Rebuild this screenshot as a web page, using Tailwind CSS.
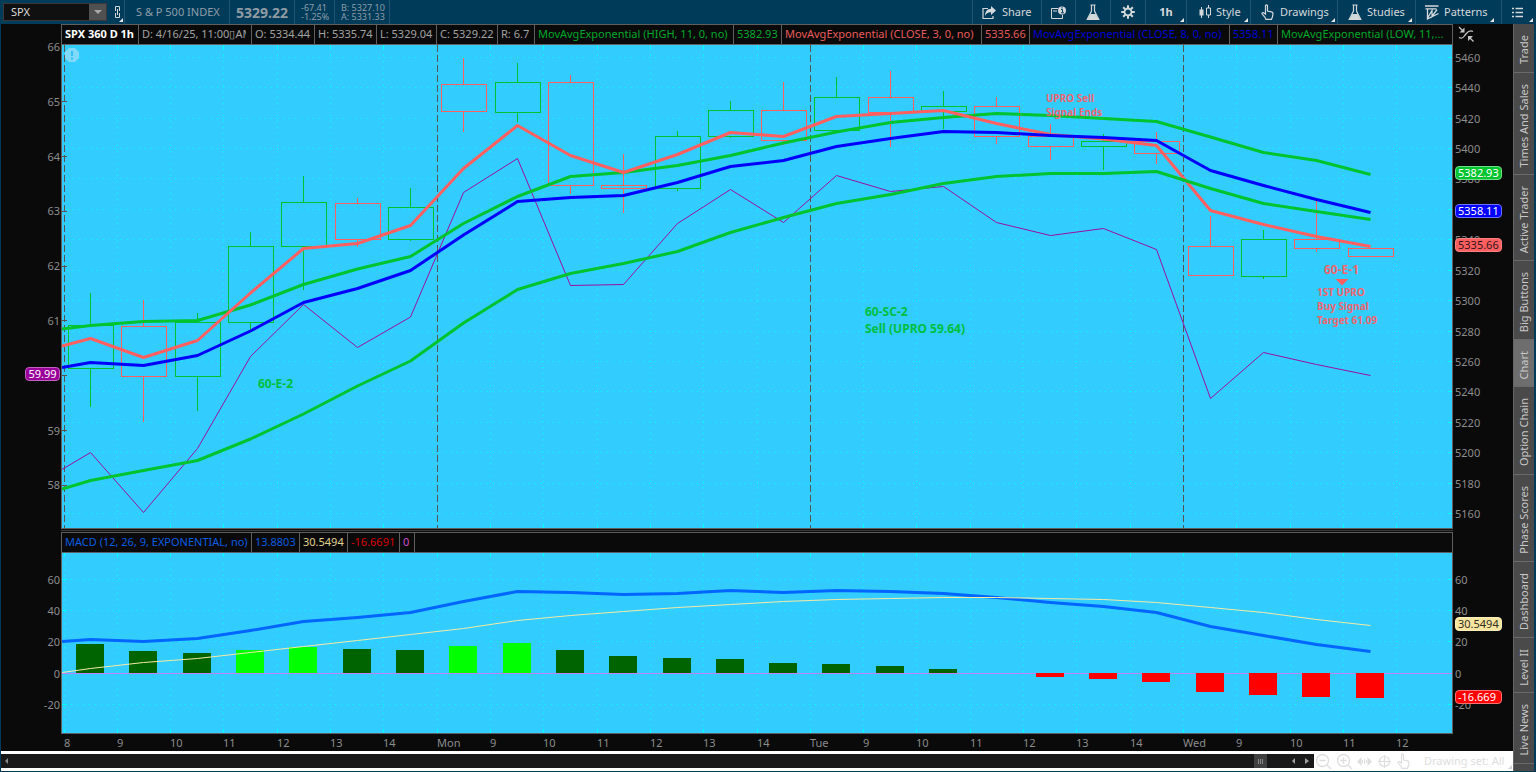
<!DOCTYPE html>
<html lang="en">
<head>
<meta charset="utf-8">
<title>SPX – S &amp; P 500 INDEX</title>
<script src="https://cdn.jsdelivr.net/npm/@tailwindcss/browser@4"></script>
</head>
<body class="h-screen overflow-hidden bg-[#0a0a0a] font-['Noto_Sans',sans-serif] text-[11px] text-[#8c8c8c]">
<div class="flex h-full flex-col border-b border-l border-[#003b5a]">

  <!-- Toolbar -->
  <header class="flex h-6 shrink-0 items-stretch bg-[#003b5a] text-[#d3d8db]">
    <div class="my-[3px] ml-[2px] flex w-26 border border-[#3a3a3a] bg-[#101010]">
      <input aria-label="Symbol" value="SPX" class="min-w-0 flex-1 bg-transparent pl-[7px] text-[11px] text-[#dcdcdc] outline-none">
      <button aria-label="Open symbol list" class="flex w-[17px] items-center justify-center bg-[#505050]">
        <svg width="8" height="4" viewBox="0 0 8 4"><path d="M0 0h8L4 4z" fill="#a8a8a8"/></svg>
      </button>
    </div>
    <button aria-label="Link symbol" class="relative flex w-[18px] items-center justify-center border-r border-[#1d5473] pl-1">
      <svg width="7" height="14" viewBox="0 0 7 14" fill="none" stroke="#d3d8db" stroke-width="1"><path d="M1.500 6V1.500h4V6M1.500 8v4.500h4V8M3.500 4v6"/></svg>
      <svg class="absolute right-px bottom-[2px]" width="4" height="4" viewBox="0 0 4 4"><path d="M4 0v4H0z" fill="#e6e6e6"/></svg>
    </button>
    <div class="flex w-[105px] items-center border-r border-[#1d5473] pl-[11px] text-[11px] whitespace-nowrap text-[#8d9ea8]">S &amp; P 500 INDEX</div>
    <div class="flex w-[65px] items-center border-r border-[#1d5473] pl-[6px] text-[14px] font-bold text-[#8f9ba2]">5329.22</div>
    <div class="flex w-10 flex-col justify-center border-r border-[#1d5473] pl-[6px] text-[9px] leading-[9px] whitespace-nowrap text-[#8d9ea8]"><span>-67.41</span><span>-1.25%</span></div>
    <div class="flex w-[55px] flex-col justify-center border-r border-[#1d5473] pl-[6px] text-[9px] leading-[9px] whitespace-nowrap text-[#8d9ea8]"><span>B: 5327.10</span><span>A: 5331.33</span></div>
    <div class="flex-1"></div>
    <button class="flex w-[69px] items-center gap-[6px] border-l border-[#1d5473] pl-[9px]">
      <svg width="14" height="13" viewBox="0 0 14 13"><path d="M6 2.500H1v10h10V10" fill="none" stroke="#d3d8db" stroke-width="1.200"/><path d="M9 0l5 4.500L9 9V6.300C6 6.200 4.200 7.300 3 10c0-4.300 2-7.200 6-7.300z" fill="#d3d8db"/></svg>Share</button>
    <button aria-label="Calendar events" class="flex w-[34px] items-center justify-center border-l border-[#1d5473]">
      <svg width="15" height="13" viewBox="0 0 15 13"><path d="M7 2.500H.500v10h11V9" fill="none" stroke="#d3d8db"/><path d="M2 5h4" stroke="#d3d8db"/><circle cx="11" cy="4.500" r="4" fill="#d3d8db"/><path d="M10 3.500h1.500v3M10 6.800h3M11 1.200v1.300" stroke="#003b5a" fill="none"/></svg></button>
    <button aria-label="Alerts" class="flex w-[35px] items-center justify-center border-l border-[#1d5473]">
      <svg width="14" height="17" viewBox="0 0 14 17"><path d="M4.500 1h5M5.500 1v6L1.200 15.500h11.600L8.500 7V1" fill="none" stroke="#d3d8db" stroke-width="1.200"/><path d="M4.500 10h5l3 5.500h-11z" fill="#d3d8db"/></svg></button>
    <button aria-label="Settings" class="flex w-[35px] items-center justify-center border-l border-[#1d5473]">
      <svg width="14" height="14" viewBox="-7 -7 14 14" stroke="#d3d8db" fill="none"><circle r="3.500" stroke-width="1.800"/><path stroke-width="2" d="M0-4v-2.800M0 4v2.800M-4 0h-2.800M4 0h2.800M-2.800-2.800l-2-2M2.800 2.800l2 2M-2.800 2.800l-2 2M2.800-2.800l2-2"/></svg></button>
    <button class="relative w-[41px] border-l border-[#1d5473] font-bold">1h
      <svg class="absolute right-[2px] bottom-[2px]" width="4" height="4" viewBox="0 0 4 4"><path d="M4 0v4H0z" fill="#e6e6e6"/></svg></button>
    <button class="relative flex w-16 items-center gap-[5px] border-l border-[#1d5473] pl-3">
      <svg width="12" height="14" viewBox="0 0 12 14"><path d="M2.500 2v11M9.500 0v3M9.500 10v3" stroke="#d3d8db"/><path d="M.500 4.500h4v6h-4z" fill="#d3d8db"/><path d="M7.500 3h4v7h-4z" fill="none" stroke="#d3d8db"/></svg>Style
      <svg class="absolute right-[2px] bottom-[2px]" width="4" height="4" viewBox="0 0 4 4"><path d="M4 0v4H0z" fill="#e6e6e6"/></svg></button>
    <button class="relative flex w-[87px] items-center gap-[6px] border-l border-[#1d5473] pl-[10px]">
      <svg width="13" height="16" viewBox="0 0 13 16"><path d="M4.500 10V1.500Q5.500.300 6.500 1.500V7l4 .8q1.600.4 1.500 2L11.400 13l-1 2.300H5L3.800 13 1 9.800Q1 8.300 2.600 8.700z" fill="none" stroke="#d3d8db" stroke-width="1.200"/></svg>Drawings
      <svg class="absolute right-[2px] bottom-[2px]" width="4" height="4" viewBox="0 0 4 4"><path d="M4 0v4H0z" fill="#e6e6e6"/></svg></button>
    <button class="relative flex w-[78px] items-center gap-[5px] border-l border-[#1d5473] pl-[10px]">
      <svg width="14" height="17" viewBox="0 0 14 17"><path d="M4.500 1h5M5.500 1v6L1.200 15.500h11.600L8.500 7V1" fill="none" stroke="#d3d8db" stroke-width="1.200"/><path d="M4.500 10h5l3 5.500h-11z" fill="#d3d8db"/></svg>Studies
      <svg class="absolute right-[3px] bottom-[2px]" width="4" height="4" viewBox="0 0 4 4"><path d="M4 0v4H0z" fill="#e6e6e6"/></svg></button>
    <button class="relative flex w-[86px] items-center gap-[5px] border-l border-[#1d5473] pl-[9px]">
      <svg width="14" height="15" viewBox="0 0 14 15" fill="none" stroke="#d3d8db" stroke-width="1.300"><path d="M0 1h13.500M.500 3.800h11M2.500 4v9L7 5.500v6L12 4.500M2 14.200L13.500 8.500"/></svg>Patterns
      <svg class="absolute right-[7px] bottom-[2px]" width="4" height="4" viewBox="0 0 4 4"><path d="M4 0v4H0z" fill="#e6e6e6"/></svg></button>
    <button aria-label="Menu" class="relative flex w-[35px] items-center justify-center border-l border-[#1d5473] pr-1">
      <svg width="11" height="11" viewBox="0 0 11 11" stroke="#d3d8db" stroke-width="1.400"><path d="M0 1.500h2M3.500 1.500H11M0 5.500h2M3.500 5.500H11M0 9.500h2M3.500 9.500H11"/></svg>
      <svg class="absolute right-[3px] bottom-[2px]" width="4" height="4" viewBox="0 0 4 4"><path d="M4 0v4H0z" fill="#e6e6e6"/></svg></button>
  </header>

  <div class="flex min-h-0 flex-1">
    <main class="flex min-w-0 flex-1 flex-col">
      <!-- Chart grid: left axis, plots, right axis -->
      <div class="grid min-h-0 flex-1 grid-cols-[60px_minmax(0,1fr)_60px] grid-rows-[21px_minmax(0,483fr)_4px_21px_minmax(0,180fr)_18px]">
        <div></div>
        <div class="flex items-stretch overflow-hidden border border-[#5f5f5f] leading-[18px] whitespace-nowrap text-[#a2a2a2]">
          <div class="w-[77px] shrink-0 overflow-hidden border-r border-[#5f5f5f] pl-[3px] font-bold text-white">SPX 360 D 1h</div>
          <div class="w-[113px] shrink-0 border-r border-[#5f5f5f] pl-[3px]"><div class="w-[104px] overflow-hidden">D: 4/16/25, 11:00▯AM</div></div>
          <div class="w-[63px] shrink-0 border-r border-[#5f5f5f] pl-[3px]">O: 5334.44</div>
          <div class="w-[62px] shrink-0 border-r border-[#5f5f5f] pl-[3px]">H: 5335.74</div>
          <div class="w-[60px] shrink-0 border-r border-[#5f5f5f] pl-[3px]">L: 5329.04</div>
          <div class="w-[61px] shrink-0 border-r border-[#5f5f5f] pl-[3px]">C: 5329.22</div>
          <div class="w-[37px] shrink-0 border-r border-[#5f5f5f] pl-[3px]">R: 6.7</div>
          <div class="w-[199px] shrink-0 border-r border-[#5f5f5f] pl-[3px] text-[#00a82b]">MovAvgExponential (HIGH, 11, 0, no)</div>
          <div class="w-[48px] shrink-0 border-r border-[#5f5f5f] pl-[3px] text-[#00a82b]">5382.93</div>
          <div class="w-[200px] shrink-0 border-r border-[#5f5f5f] pl-[3px] text-[#e85a5a]">MovAvgExponential (CLOSE, 3, 0, no)</div>
          <div class="w-[48px] shrink-0 border-r border-[#5f5f5f] pl-[3px] text-[#e85a5a]">5335.66</div>
          <div class="w-[200px] shrink-0 border-r border-[#5f5f5f] pl-[3px] text-[#0000d8]">MovAvgExponential (CLOSE, 8, 0, no)</div>
          <div class="w-[48px] shrink-0 border-r border-[#5f5f5f] pl-[3px] text-[#0000d8]">5358.11</div>
          <div class="min-w-0 flex-1 overflow-hidden pl-[3px] text-[#00a82b]">MovAvgExponential (LOW, 11,...</div>
        </div>
        <div class="pt-[2px] pl-[5px]">
          <svg width="17" height="17" viewBox="0 0 17 17" fill="none" stroke="#c4c4c4" stroke-width="1.300"><path d="M1 11.500c4 2 5-1 6.500-3S11 3.500 15 5.500M1 1l4 4M15.500 15.500l-4-4"/><path d="M6.500 1.500V6.500H1.500zM10 15v-5h5z" fill="#c4c4c4" stroke="none"/></svg>
        </div>

        <div id="priceLeft" class="relative z-10"></div>
        <div id="pricePlot" class="relative overflow-hidden border-x border-[#5f5f5f] bg-[#33ccff]">
          <svg id="priceSvg" class="absolute inset-0 size-full" viewBox="62 45 1390 483" preserveAspectRatio="none" fill="none"></svg>
          <svg class="absolute top-[3px] left-[3px]" width="14" height="14" viewBox="0 0 14 14"><path d="M4 0h6l4 4v6l-4 4H4l-4-4V4z" fill="#80d8fa"/><path d="M7 3v5M7 9.500v2" stroke="#33bff0" stroke-width="2"/></svg>
        </div>
        <div id="priceRight" class="relative"></div>

        <div></div>
        <div class="flex flex-col border-t border-[#5f5f5f] pt-px"><div class="h-px bg-[#3c3c3c]"></div></div>
        <div></div>

        <div></div>
        <div class="flex items-stretch border border-[#5f5f5f] leading-[18px] whitespace-nowrap">
          <div class="w-[190px] border-r border-[#5f5f5f] pl-[3px] text-[#0a5ce0]">MACD (12, 26, 9, EXPONENTIAL, no)</div>
          <div class="w-12 border-r border-[#5f5f5f] pl-[3px] text-[#0a5ce0]">13.8803</div>
          <div class="w-12 border-r border-[#5f5f5f] pl-[3px] text-[#e0d190]">30.5494</div>
          <div class="w-[52px] border-r border-[#5f5f5f] pl-[3px] text-[#d80000]">-16.6691</div>
          <div class="w-[15px] border-r border-[#5f5f5f] pl-[3px] text-[#cf4fcf]">0</div>
        </div>
        <div></div>

        <div id="macdLeft" class="relative"></div>
        <div class="relative overflow-hidden border-x border-[#5f5f5f] bg-[#33ccff]">
          <svg id="macdSvg" class="absolute inset-0 size-full" viewBox="62 553 1390 180" preserveAspectRatio="none" fill="none"></svg>
        </div>
        <div id="macdRight" class="relative"></div>

        <div></div>
        <div id="timeAxis" class="relative border-t border-[#5f5f5f]"></div>
        <div></div>
      </div>

      <!-- Scroll strip and chart tools -->
      <footer class="flex h-5 shrink-0 items-stretch bg-white text-[#dedede]">
        <div class="my-[3px] flex flex-1 items-center justify-between bg-[#191919]">
          <button aria-label="Scroll left" class="pl-1"><svg width="3" height="6" viewBox="0 0 3 6"><path d="M3 0v6L0 3z" fill="#8a8a8a"/></svg></button>
          <div class="flex h-full items-center">
            <div class="mr-[25px] flex h-full w-[13px] items-center justify-center gap-px bg-[#404040]"><i class="h-[5px] w-px bg-[#888]"></i><i class="h-[5px] w-px bg-[#888]"></i><i class="h-[5px] w-px bg-[#888]"></i></div>
            <button aria-label="Step left"><svg width="3" height="6" viewBox="0 0 3 6"><path d="M3 0v6L0 3z" fill="#a0a0a0"/></svg></button>
            <button aria-label="Step right" class="mr-[5px] ml-[10px]"><svg width="4" height="6" viewBox="0 0 4 6"><path d="M0 0v6L4 3z" fill="#a0a0a0"/></svg></button>
          </div>
        </div>
        <div class="flex w-[199px] items-center gap-1 pl-[1px]">
          <button aria-label="Zoom out"><svg width="17" height="17" viewBox="0 0 17 17" fill="none" stroke="#dedede" stroke-width="1.300"><circle cx="7.500" cy="7.500" r="6"/><path d="M4.500 7.500h6M12 12l4 4"/></svg></button>
          <button aria-label="Zoom in"><svg width="17" height="17" viewBox="0 0 17 17" fill="none" stroke="#dedede" stroke-width="1.300"><circle cx="7.500" cy="7.500" r="6"/><path d="M4.500 7.500h6M7.500 4.500v6M12 12l4 4"/></svg></button>
          <button aria-label="Pan"><svg width="15" height="9" viewBox="0 0 15 9" fill="#dedede"><path d="M4.500 0v9L0 4.500zM10.500 0v9L15 4.500zM5 3h1v3H5zM7 2h1v5H7zM9 3h1v3H9z"/></svg></button>
          <button aria-label="Crosshair" class="ml-[2px]"><svg width="13" height="13" viewBox="0 0 13 13" fill="none" stroke="#dedede" stroke-width="1.200"><circle cx="6.500" cy="6.500" r="5"/><path d="M6.500 0v13M0 6.500h13"/></svg></button>
          <button aria-label="Pointer" class="ml-[2px]"><svg width="13" height="16" viewBox="0 0 13 16"><path d="M4.500 10V1.500Q5.500.300 6.500 1.500V7l4 .8q1.600.4 1.500 2L11.400 13l-1 2.300H5L3.800 13 1 9.800Q1 8.300 2.600 8.700z" fill="none" stroke="#dedede" stroke-width="1.200"/></svg></button>
          <button class="relative ml-[10px] flex-1 text-left whitespace-nowrap">Drawing set: All<svg class="absolute right-px bottom-0" width="4" height="4" viewBox="0 0 4 4"><path d="M4 0v4H0z" fill="#d0d0d0"/></svg></button>
        </div>
      </footer>
    </main>

    <!-- Side tabs -->
    <nav class="flex w-[23px] shrink-0 flex-col overflow-hidden border-r-2 border-l border-r-[#003b5a] border-l-[#666] bg-[#4a4a4a] text-[11px] text-[#c8c8c8]">
      <button class="flex h-[49px] shrink-0 items-center justify-center border-b border-[#6a6a6a] pt-1"><span class="rotate-180 [writing-mode:vertical-rl]">Trade</span></button>
      <button class="flex h-[102px] shrink-0 items-center justify-center border-b border-[#6a6a6a] pt-1"><span class="rotate-180 whitespace-nowrap [writing-mode:vertical-rl]">Times And Sales</span></button>
      <button class="flex h-[86px] shrink-0 items-center justify-center border-b border-[#6a6a6a] pt-1"><span class="rotate-180 whitespace-nowrap [writing-mode:vertical-rl]">Active Trader</span></button>
      <button class="flex h-[79px] shrink-0 items-center justify-center border-b border-[#6a6a6a] pt-1"><span class="rotate-180 whitespace-nowrap [writing-mode:vertical-rl]">Big Buttons</span></button>
      <button class="flex h-[47px] shrink-0 items-center justify-center border-b border-[#6a6a6a] bg-[#6e6e6e] pt-1"><span class="rotate-180 [writing-mode:vertical-rl]">Chart</span></button>
      <button class="flex h-[88px] shrink-0 items-center justify-center border-b border-[#6a6a6a] pt-1"><span class="rotate-180 whitespace-nowrap [writing-mode:vertical-rl]">Option Chain</span></button>
      <button class="flex h-[87px] shrink-0 items-center justify-center border-b border-[#6a6a6a] pt-1"><span class="rotate-180 whitespace-nowrap [writing-mode:vertical-rl]">Phase Scores</span></button>
      <button class="flex h-[76px] shrink-0 items-center justify-center border-b border-[#6a6a6a] pt-1"><span class="rotate-180 [writing-mode:vertical-rl]">Dashboard</span></button>
      <button class="flex h-[55px] shrink-0 items-center justify-center border-b border-[#6a6a6a] pt-1"><span class="rotate-180 whitespace-nowrap [writing-mode:vertical-rl]">Level II</span></button>
      <button class="flex h-[71px] shrink-0 items-center justify-center border-b border-[#6a6a6a] pt-1"><span class="rotate-180 whitespace-nowrap [writing-mode:vertical-rl]">Live News</span></button>
    </nav>
  </div>
</div>

<script>
const GREEN = '#00c42e', RED = '#ff5f5f';
const P = { x: 62, y: 45, w: 1390, h: 483 }, M = { x: 62, y: 553, w: 1390, h: 180 };
const el = id => document.getElementById(id);
const gridX = [64,117,170,223,277,330,383,437,490,543,597,650,703,757,810,863,916,970,1023,1076,1130,1183,1236,1290,1343,1396].map(x => x + 0.5);
const barX = [90,143,197,250,303,357,410,463,517,570,623,677,730,783,836,890,943,996,1050,1103,1156,1210,1263,1316,1370].map(x => x + 0.5);
const days = [0, 7, 14, 21];
const line = (x1, y1, x2, y2, c, extra = '') => `<path d="M${x1} ${y1}L${x2} ${y2}" stroke="${c}" ${extra}/>`;
const poly = (ys, c, w) => `<polyline points="${[62].concat(barX).map((x, i) => x + ',' + ys[i]).join(' ')}" stroke="${c}" stroke-width="${w}" stroke-linejoin="round"/>`;

// Price pane
const rowsY = Array.from({ length: 16 }, (_, i) => Math.floor(57.3 + i * 30.42) + 0.5);
let s = '<g shape-rendering="crispEdges">';
rowsY.forEach(y => { s += line(67, y, 1446, y, '#00ffff', 'stroke-dasharray="1 5"') + line(1448, y, 1452, y, '#00ffff'); });
gridX.forEach((x, i) => {
  if (days.includes(i)) s += line(x, 45, x, 528, '#555', 'stroke-dasharray="7 3"');
  else s += line(x, 55, x, 522, '#00ffff', 'stroke-dasharray="1 5"') + line(x, 45, x, 50, '#00ffff') + line(x, 524, x, 528, '#00ffff');
});
[101.5, 156.5, 211.5, 266.5, 320.5, 375.5, 430.5, 485.5].forEach(y => s += line(62, y, 67, y, '#555'));
// up flag, wick top, body top, body bottom, wick bottom
const candles = [
  [1,293,325,368,407],[0,300,326,376,422],[1,313,322,376,411],[1,232,246,322,330],[1,176,202,246,290],
  [0,198,203,239,247],[1,188,207,239,241],[0,58,84,111,132],[1,63,82,112,122],[0,75,82,185,194],
  [0,154,185,188,213],[1,131,136,188,191],[1,101,110,136,138],[0,82,110,140,145],[1,77,97,130,131],
  [0,71,97,112,147],[1,91,106,111,129],[0,97,106,136,144],[0,124,136,146,160],[1,134,141,146,170],
  [0,132,141,153,164],[0,216,246,275,275],[1,230,239,276,279],[0,200,239,248,252],[0,248,248,256,256]];
candles.forEach(([up, a, b, c, d], i) => {
  const x = barX[i], col = up ? GREEN : RED;
  s += `<path d="M${x - 22} ${b + .5}h45V${c + .5}h-45zM${x} ${a}V${b}M${x} ${c}V${d}" stroke="${col}"/>`;
});
s += '</g>';
s += poly([469.5,452.5,512.5,448.5,356.5,304.5,347.5,317,192.5,158.5,285.5,284.5,223.5,189.5,222.5,175.5,191.5,186.5,222.5,235.5,228.5,249.5,398.5,352.5,364.5,375.5], '#9a10a0', 1);
s += poly([329,325.5,321.5,320.5,305,284.5,269,256.5,223.5,196.5,176.5,172.5,165.5,155.5,143,132,122.5,117.5,113.5,115.5,118.5,121.5,137,152.5,160.5,174.5], GREEN, 3);
s += poly([346,338.5,357.5,340.5,293,248.5,243.5,225.5,168.5,125.5,155.5,172.5,154.5,132.5,136.5,116.5,113.5,110.5,123.5,134.5,139,145.5,210.5,224.5,236.5,246.5], RED, 3);
s += poly([367.5,362.5,365.5,355.5,331,302.5,288.5,270.5,235,201.5,197.5,195.5,182.5,166.5,160.5,146.5,138.5,131.5,132.5,135.5,137.5,140.5,170.5,185.5,199.5,212.5], '#0000ff', 3);
s += poly([489,480.5,470.5,460.5,439,414,386,361,323,289.5,273.5,263.5,251.5,232.5,217.5,203.5,194.5,183.5,176.5,173.5,173.5,171.5,188.5,203.5,211.5,219.5], GREEN, 3);
s += `<path d="M1335.500 279h13l-6.500 6.500z" fill="${RED}"/>`;
el('priceSvg').innerHTML = s;

// MACD pane
let m = '<g shape-rendering="crispEdges">';
[579.5, 610.5, 641.5, 704.5].forEach(y => { m += line(62, y, 67, y, '#00ffff') + line(71, y, 1446, y, '#00ffff', 'stroke-dasharray="1 5"') + line(1448, y, 1452, y, '#00ffff'); });
gridX.forEach(x => m += line(x, 553, x, 557, '#00ffff') + line(x, 563, x, 726, '#00ffff', 'stroke-dasharray="1 5"') + line(x, 729, x, 733, '#00ffff'));
const DK = '#006400', LT = '#00ff00';
[[644,DK],[651,DK],[653,DK],[650,LT],[647,LT],[649,DK],[650,DK],[646,LT],[643,LT],[650,DK],[656,DK],[658,DK],[659,DK],[663,DK],[664,DK],[666,DK],[669,DK],[673,DK],[677,'#f00'],[679,'#f00'],[682,'#f00'],[692,'#f00'],[695,'#f00'],[697,'#f00'],[698,'#f00']]
  .forEach(([y, c], i) => m += `<rect x="${barX[i] - 14.5}" y="${Math.min(y, 673)}" width="28" height="${Math.abs(673 - y)}" fill="${c}"/>`);
let zero = '', segments = [62].concat(barX.slice(18).flatMap(x => [x - 14.5, x + 13.5]), 1452);
for (let i = 0; i < segments.length; i += 2) zero += line(segments[i], 673.5, segments[i + 1], 673.5, '#c080ff');
m += zero + '</g>';
m += poly([641.5,639.5,641.5,638.5,630.5,621.5,617.5,612.5,601.5,591.5,592.5,594.5,593.5,590.5,592.5,590.5,591.5,593.5,597.5,602.5,606.5,612.5,626.5,635.5,644.5,651.5], '#0066ff', 3);
m += poly([672.5,668.5,662.5,658.5,652.5,646.5,640.5,634.5,628.5,620.5,615.5,611.5,607.5,604.5,601.5,599.5,598.5,597.5,597.5,598.5,599.5,602.5,607.5,612.5,619.5,625.5], '#f5eaa5', 1);
el('macdSvg').innerHTML = m;

// Axis labels
const put = (host, cls, style, text) => { const d = document.createElement('div'); d.className = cls; d.style.cssText = style; d.textContent = text; host.append(d); };
const top_ = (y, p) => `top:${(y - p.y) / p.h * 100}%`;
const L = 'absolute right-px -translate-y-1/2 leading-4', R = 'absolute left-[2px] -translate-y-1/2 leading-4';
[66, 65, 64, 63, 62, 61, null, 59, 58].forEach((v, i) => v && put(el('priceLeft'), L, top_(47 + i * 54.8, P), v));
rowsY.forEach((y, i) => i !== 5 && put(el('priceRight'), R, top_(y + .5, P), 5460 - i * 20));
[[60, 580], [40, 611], [20, 642], [0, 674], [-20, 705]].forEach(([v, y]) => { put(el('macdLeft'), L, top_(y, M), v); put(el('macdRight'), R, top_(y, M), v); });
'8 9 10 11 12 13 14 Mon 9 10 11 12 13 14 Tue 9 10 11 12 13 14 Wed 9 10 11 12'.split(' ')
  .forEach((t, i) => put(el('timeAxis'), 'absolute top-px leading-4', `left:${(gridX[i] - 61.5) / 13.92}%`, t));

// Value badges
put(el('priceLeft'), 'absolute right-[1px] h-[14px] w-[35px] -translate-y-1/2 rounded-[4px] border border-[#c060c0] bg-[#990099] text-center text-[11px] leading-[12px] text-white', top_(374, P), '59.99');
const B = 'absolute left-[2px] h-[14px] w-[47px] -translate-y-1/2 rounded-[4px] border pl-[2px] text-[11px] leading-[12px] ';
put(el('priceRight'), B + 'border-[#70dd88] bg-[#00c42e] text-white', top_(173, P), '5382.93');
put(el('priceRight'), B + 'border-[#7070ff] bg-[#0000ff] text-white', top_(211, P), '5358.11');
put(el('priceRight'), B + 'border-[#ff8080] bg-[#ff5f5f] text-[#33141a]', top_(245, P), '5335.66');
put(el('macdRight'), B + 'border-[#fff0b8] bg-[#f7e5a0] text-[#333020]', top_(624, M), '30.5494');
put(el('macdRight'), B + 'border-[#ff7070] bg-[#ff0000] text-white', top_(697, M), '-16.669');

// Drawn notes
const N = 'absolute -translate-y-1/2 whitespace-pre font-bold ';
const note = (x, y, cls, t) => put(el('pricePlot'), N + cls, `left:${(x - 62) / 13.9}%;` + top_(y, P), t);
note(258, 383, 'text-[12px] leading-[17px] text-[#00c040]', '60-E-2');
note(865, 320, 'text-[12px] leading-[17px] text-[#00c040]', '60-SC-2\nSell (UPRO 59.64)');
note(1046, 105, 'text-[10px] leading-[14px] text-[#f0656e]', 'UPRO Sell\nSignal Ends');
note(1324, 269, 'text-[12px] leading-[17px] text-[#f0656e]', '60-E-1');
note(1317, 306, 'text-[10px] leading-[14px] text-[#f0656e]', '1ST UPRO\nBuy Signal\nTarget 61.09');
</script>
</body>
</html>
